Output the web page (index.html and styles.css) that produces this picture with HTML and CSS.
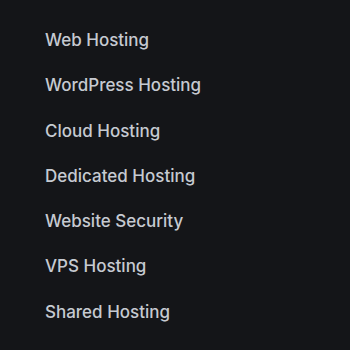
FILE: index.html
```html
<!DOCTYPE html>
<html>
<head>
  <title>Hosting</title>
  <link rel="stylesheet" href="styles.css">
</head>
<body>
  <ul class="menu">
    <li><a href="#">Web Hosting</a></li>
    <li><a href="#">WordPress Hosting</a></li>
    <li><a href="#">Cloud Hosting</a></li>
    <li><a href="#">Dedicated Hosting</a></li>
    <li><a href="#">Website Security</a></li>
    <li><a href="#">VPS Hosting</a></li>
    <li><a href="#">Shared Hosting</a></li>
  </ul>
</body>
</html>
```

FILE: styles.css
```css
body {
  margin: 0;
  background: #141518;
  font-family: Inter, "Noto Sans", sans-serif;
  height: 350px;
}
.menu {
  list-style: none;
  margin: 0;
  padding: 28px 0 0 45px;
  display: flex;
  flex-direction: column;
  gap: 21.3px;
}
.menu a {
  display: block;
  color: #c6cad1;
  text-decoration: none;
  font-size: 17px;
  font-weight: 500;
  line-height: 24px;
}
```
